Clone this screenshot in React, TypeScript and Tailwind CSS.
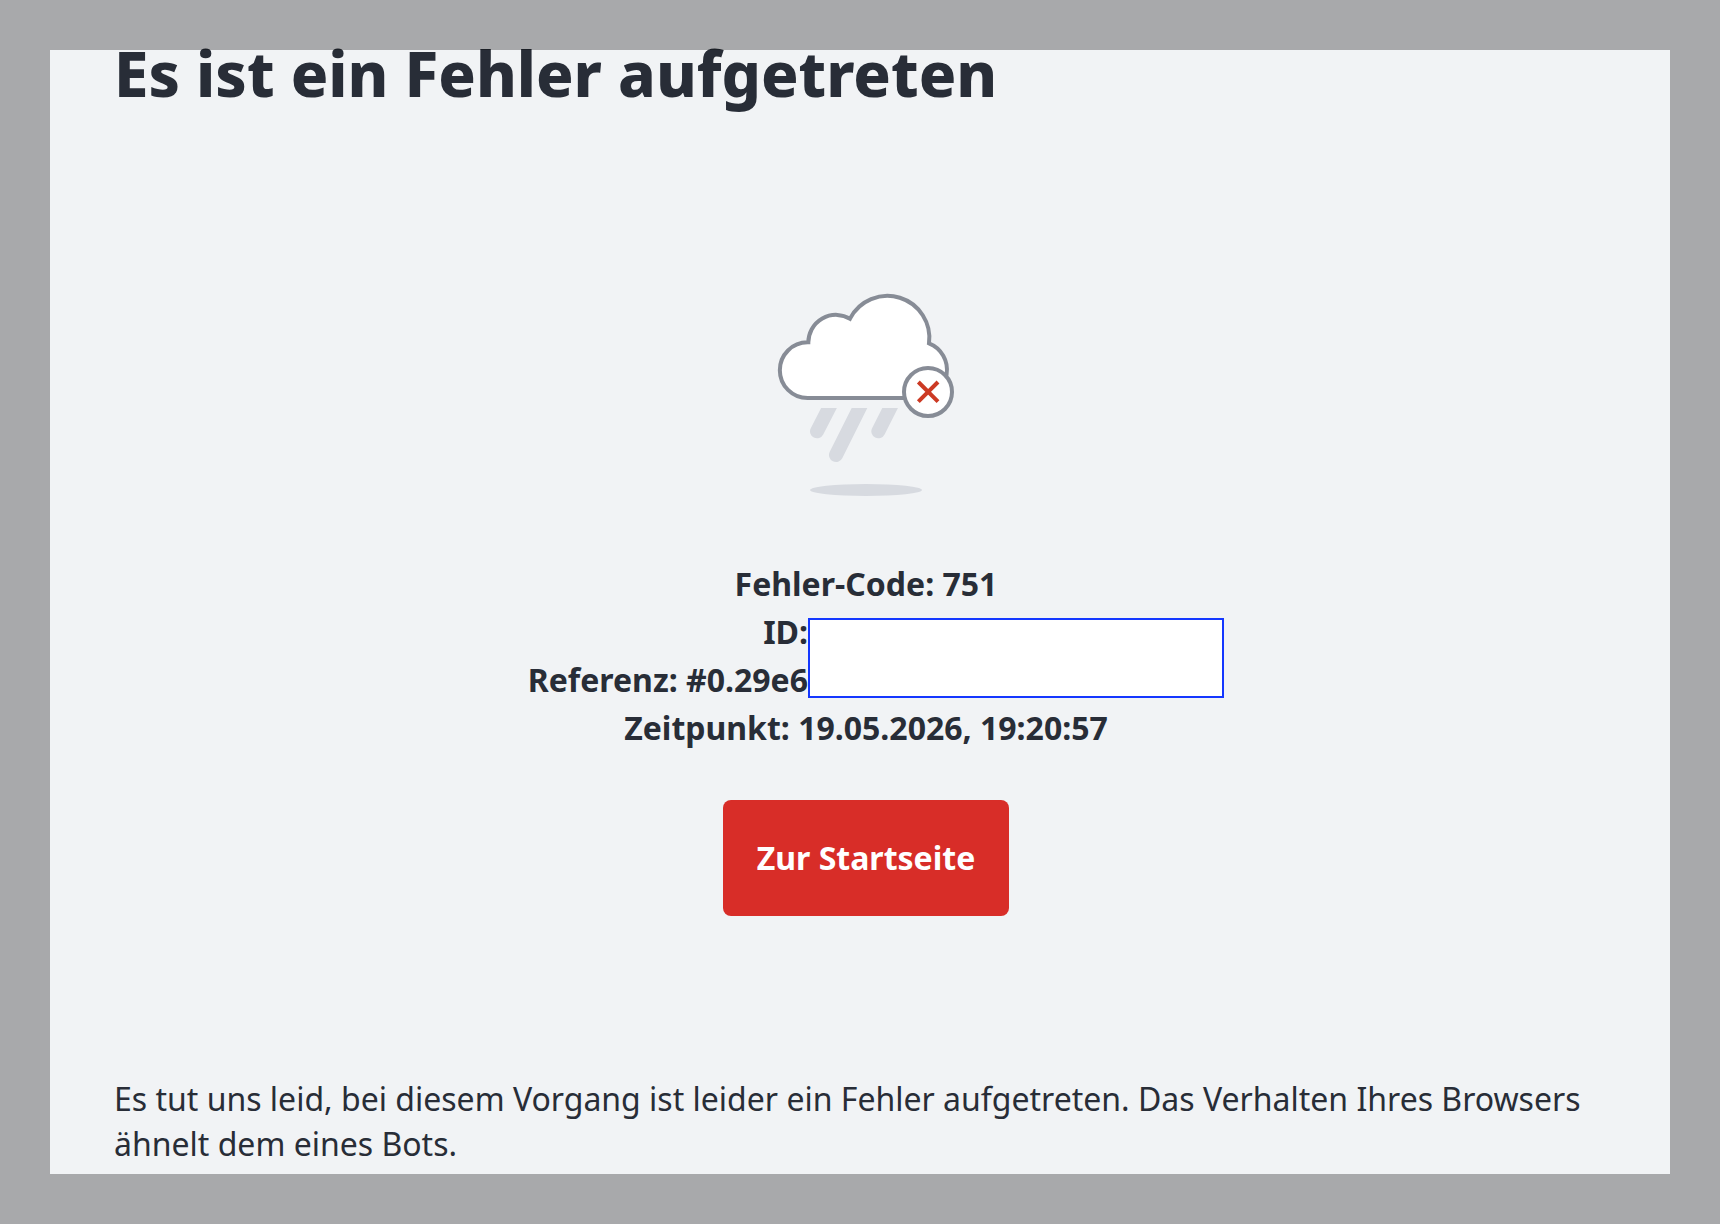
function RainCloudError() {
  return (
    <svg viewBox="3 0 630 690" className="w-[210px] h-[230px]" aria-hidden="true">
      <defs>
        <clipPath id="rain">
          <rect x="0" y="384" width="630" height="200" />
        </clipPath>
      </defs>
      <ellipse cx="318" cy="630" rx="168" ry="18" fill="#d7dae0" />
      <g clipPath="url(#rain)" stroke="#d7dae0" strokeWidth="42" strokeLinecap="round">
        <line x1="225" y1="349" x2="171" y2="454" />
        <line x1="316" y1="349" x2="228" y2="525" />
        <line x1="408" y1="349" x2="355" y2="454" />
      </g>
      <path
        d="M143 354A83.500 83.500 0 0 1 143 187H145A83 83 0 0 1 270 116A126 126 0 0 1 507 190A85 85 0 0 1 480 354Z"
        fill="#fff"
        stroke="#878c96"
        strokeWidth="12"
      />
      <circle cx="504" cy="336" r="72" fill="#fff" stroke="#878c96" strokeWidth="12" />
      <path d="M475 306L534 365M534 306L475 365" stroke="#cc3a24" strokeWidth="12" />
    </svg>
  )
}

export default function App() {
  return (
    <div className="relative min-h-screen bg-[#f1f3f5] text-[#282d37] font-['Noto_Sans',sans-serif]">
      <main className="pt-[35px] pl-[114px] pr-[102px] pb-[50px]">
        <h1 className="text-[62px] leading-[76px] font-extrabold">Es ist ein Fehler aufgetreten</h1>

        <section className="mt-[169px] flex flex-col items-center">
          <RainCloudError />

          <div className="mt-[50px] w-full text-center text-[32px] leading-[48px] font-bold">
            <p>Fehler-Code: 751</p>
            <div className="grid grid-cols-[1fr_416px_1fr] items-center pl-[300px]">
              <div className="text-right whitespace-nowrap">
                <p>ID:</p>
                <p>Referenz: #0.29e6</p>
              </div>
              <div className="mt-1 h-20 border-2 border-[#1437ff] bg-white" />
            </div>
            <p>Zeitpunkt: 19.05.2026, 19:20:57</p>
          </div>

          <button
            type="button"
            className="mt-12 h-[116px] w-[286px] rounded-lg bg-[#d82d28] text-[32px] font-bold text-white"
          >
            Zur Startseite
          </button>
        </section>

        <p className="mt-[160px] text-[32px] leading-[45px]">
          Es tut uns leid, bei diesem Vorgang ist leider ein Fehler aufgetreten. Das Verhalten Ihres Browsers
          ähnelt dem eines Bots.
        </p>
      </main>

      {/* Dimmed frame around the page */}
      <div className="pointer-events-none absolute inset-0 border-[50px] border-black/30" />
    </div>
  )
}
